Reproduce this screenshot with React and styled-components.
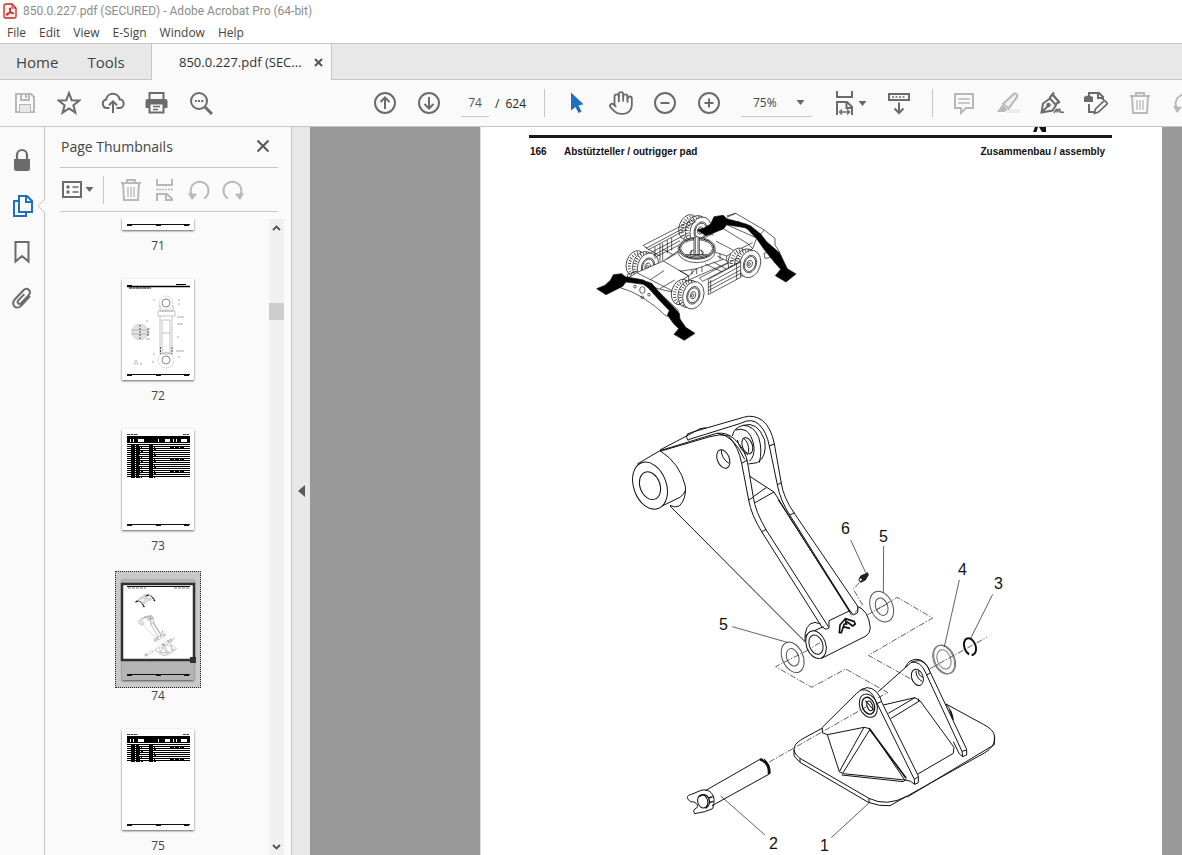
import React from "react";
import styled, { createGlobalStyle } from "styled-components";
import { Hand } from "lucide-react";

const GlobalStyle = createGlobalStyle`
  * { box-sizing: border-box; }
  body { margin: 0; overflow: hidden; background: #fafafa; }
  button, input, select { font: inherit; color: inherit; background: none; border: 0; padding: 0; margin: 0; }
  svg { display: block; flex: none; }
`;

const Shell = styled.div`
  display: flex;
  flex-direction: column;
  height: 100vh;
  font-family: "Open Sans", "Noto Sans", sans-serif;
  font-size: 12px;
  color: #444;
`;

const TitleBar = styled.header`
  display: flex;
  align-items: center;
  gap: 6px;
  height: 24px;
  padding: 0 0 2px 3px;
  background: #fff;
  color: #8c8c8c;
  font-family: Roboto, "Open Sans", sans-serif;
`;

const MenuBar = styled.nav`
  display: flex;
  gap: 13px;
  height: 19px;
  padding-left: 7px;
  background: #fff;
`;

const MenuItem = styled.button`
  height: 17px;
  line-height: 17px;
`;

const TabBar = styled.nav`
  display: flex;
  height: 37px;
  background: #e8e8e8;
  border-top: 1px solid #c6c6c6;
`;

const HomeTabs = styled.div`
  display: flex;
  gap: 29px;
  width: 152px;
  padding-left: 16px;
  border-right: 1px solid #c6c6c6;
  border-bottom: 1px solid #c6c6c6;
  font-size: 15px;
`;

const FileTab = styled.div`
  display: flex;
  align-items: center;
  justify-content: space-between;
  width: 180px;
  padding: 0 8px 0 27px;
  background: #fafafa;
  border-right: 1px solid #c6c6c6;
  color: #333;
`;

const FileName = styled.span`
  font-size: 13px;
`;

const TabFill = styled.div`
  flex: 1;
  border-bottom: 1px solid #c6c6c6;
`;

const ToolBar = styled.div`
  display: flex;
  align-items: center;
  height: 47px;
  padding-left: 3px;
  border-bottom: 1px solid #c6c6c6;
  background: #fafafa;
  overflow: hidden;
`;

const ToolGroup = styled.div`
  display: flex;
  flex: none;
  align-items: center;
  margin-left: ${(p) => p.$before || 0}px;
`;

const ToolButton = styled.button`
  display: flex;
  align-items: center;
  justify-content: center;
  width: ${(p) => p.$width || 44}px;
  height: 44px;
  flex: none;
  color: ${(p) => (p.$faded ? "#b8b8b8" : "#6b6b6b")};
`;

const PageBox = styled.label`
  display: flex;
  align-items: center;
  gap: 6px;
  height: 28px;
  margin-left: 10px;
  color: #222;
`;

const PageInput = styled.input`
  width: 28px;
  height: 28px;
  border-bottom: 1px solid #c6c6c6;
  text-align: center;
  color: #555;
`;

const Divider = styled.span`
  width: 1px;
  height: 28px;
  flex: none;
  background: #c6c6c6;
  margin: 0 ${(p) => p.$after || 0}px 0 ${(p) => p.$before || 0}px;
`;

const ZoomBox = styled.label`
  display: flex;
  align-items: center;
  width: 71px;
  height: 28px;
  margin: 0 20px 0 10px;
  padding-left: 12px;
  border-bottom: 1px solid #c6c6c6;
`;

const ZoomSelect = styled.select`
  appearance: none;
  width: 43px;
  outline: 0;
`;

const Main = styled.div`
  display: flex;
  flex: 1;
  min-height: 0;
`;

const Rail = styled.nav`
  display: flex;
  flex-direction: column;
  width: 45px;
  padding-top: 10px;
  border-right: 1px solid #c6c6c6;
`;

const RailButton = styled.button`
  position: relative;
  display: flex;
  align-items: center;
  justify-content: center;
  width: 44px;
  height: 46px;
  color: ${(p) => (p.$active ? "#1f6fc0" : "#6b6b6b")};
`;

const Notch = styled.svg`
  position: absolute;
  right: -1px;
  top: 16px;
`;

const Panel = styled.aside`
  display: flex;
  flex-direction: column;
  width: 247px;
  border-right: 1px solid #c6c6c6;
`;

const PanelHead = styled.div`
  display: flex;
  align-items: center;
  justify-content: space-between;
  height: 41px;
  margin: 0 13px 0 15px;
  padding: 0 8px 2px 1px;
  border-bottom: 1px solid #c6c6c6;
`;

const PanelTitle = styled.h2`
  margin: 0;
  font-size: 14px;
  font-weight: 400;
`;

const PanelTools = styled.div`
  display: flex;
  align-items: center;
  height: 44px;
  margin: 0 13px 0 15px;
  border-bottom: 1px solid #c6c6c6;
`;

const PanelBody = styled.div`
  display: flex;
  flex: 1;
  min-height: 0;
  padding: 7px 7px 0 0;
`;

const ThumbList = styled.ul`
  flex: 1;
  margin: 0;
  padding: 0 0 0 2px;
  list-style: none;
  overflow: hidden;
  &::before { content: ""; display: block; margin-top: -98px; }
`;

const ThumbItem = styled.li`
  display: flex;
  flex-direction: column;
  align-items: center;
  height: 150px;
`;

const ThumbButton = styled.button`
  position: relative;
  width: 86px;
  height: 117px;
  padding: 7px 6px;
  border: 1px dotted ${(p) => (p.$selected ? "#222" : "transparent")};
  background: ${(p) => (p.$selected ? "#c9c9c9" : "none")};
`;

const Sheet = styled.svg`
  width: 72px;
  height: 101px;
  background: ${(p) => (p.$selected ? "#b4b4b4" : "#fff")};
  box-shadow: 0 1px 2px rgba(0, 0, 0, 0.6);
`;

const ThumbLabel = styled.span`
  line-height: 16px;
`;

const ScrollTrack = styled.div`
  display: flex;
  flex-direction: column;
  align-items: center;
  width: 15px;
  background: #f0f0f0;
`;

const ScrollArrow = styled.button`
  display: flex;
  align-items: center;
  justify-content: center;
  width: 15px;
  height: 17px;
  color: #505050;
`;

const ScrollThumb = styled.div`
  width: 15px;
  height: 17px;
  margin: 67px 0 auto;
  background: #cdcdcd;
`;

const Splitter = styled.button`
  display: flex;
  align-items: center;
  justify-content: center;
  width: 18px;
  background: #e8e8e8;
  color: #5a5a5a;
`;

const Viewer = styled.main`
  flex: 1;
  min-width: 0;
  padding: 0 20px 0 170px;
  background: #999;
  overflow: hidden;
`;

const Page = styled.article`
  min-height: 100%;
  background: #fff;
  border-left: 1px solid #ddd;
  color: #111;
  font-family: "Liberation Sans", Arial, sans-serif;
`;

const PageTop = styled.header`
  margin: 0 50px 0 48px;
`;

const Brand = styled.div`
  display: flex;
  justify-content: flex-end;
  height: 8px;
  padding-right: 65px;
`;

const PageHeading = styled.div`
  display: flex;
  height: 30px;
  padding: 0 7px 0 1px;
  border-top: 3px solid #1a1a1a;
  font-size: 10px;
  font-weight: 700;
  line-height: 28px;
  & > :first-child { width: 34px; }
  & > :last-child { margin-left: auto; }
`;

const Figure = styled.svg`
  width: 100%;
  height: auto;
`;

function Icon({ children, size = 24, sw = 2, ...rest }) {
  return (
    <svg width={size} height={size} viewBox={`0 0 ${size} ${size}`} fill="none" stroke="currentColor" strokeWidth={sw} aria-hidden="true" {...rest}>
      {children}
    </svg>
  );
}

const Caret = () => (
  <svg width="9" height="5" viewBox="0 0 9 5" aria-hidden="true"><path d="M.5 0h8L4.500 5z" fill="#666" /></svg>
);

const AcrobatLogo = () => (
  <svg width="14" height="16" viewBox="0 0 14 16" aria-hidden="true">
    <path d="M2.500 1h6.500l4 4v8.500a1.500 1.500 0 0 1-1.500 1.500h-9A1.500 1.500 0 0 1 1 13.500v-11A1.500 1.500 0 0 1 2.500 1z" fill="#fff1f0" stroke="#c9251c" strokeWidth="1.300" />
    <path d="M9 1v4h4" fill="none" stroke="#c9251c" />
    <path d="M3.500 11.500c0-1.500 6.500-2.500 7-1.200.3 1.200-3.800-1-4.100-4.300 0-1.400 1.500-1.200 1.200.3C7.300 8 5.200 12.200 4 12.200c-.4 0-.5-.3-.5-.7z" fill="none" stroke="#c9251c" strokeWidth="1.100" />
  </svg>
);

const SaveIcon = () => (
  <Icon><path d="M3 3h15l3 3v15H3z" /><path d="M8 3v6h8V3M7 21v-7h10v7" /><path d="M7 14h10v7H7z" fill="#e6e6e6" stroke="none" /><path d="M13 4v3" /></Icon>
);
const StarIcon = () => (
  <Icon><path d="M12 2l2.700 7.200 7.600.3-5.900 4.800 2 7.400L12 17.500l-6.400 4.200 2-7.400-5.900-4.800 7.600-.3z" /></Icon>
);
const CloudIcon = () => (
  <Icon><path d="M8.500 17H6a4.300 4.300 0 0 1-.8-8.500 6.800 6.800 0 0 1 13.400-.3A4.400 4.400 0 0 1 18 17h-2.500" /><path d="M12 22V10.500M8 14.300l4-4 4 4" /></Icon>
);
const PrintIcon = () => (
  <Icon>
    <path d="M2.500 8h18A2 2 0 0 1 22.500 10v7h-22v-7a2 2 0 0 1 2-2z" fill="currentColor" stroke="none" />
    <path d="M4.500 8V2h14v6" />
    <path d="M4.500 12.500h14v9h-14z" fill="#fafafa" />
    <path d="M8 15.500h7M8 18.500h5" strokeWidth="1.300" />
  </Icon>
);
const FindIcon = () => (
  <Icon><circle cx="10" cy="10" r="8" /><path d="M16 16l7 7" strokeWidth="3" /><path d="M5.800 10h2m1.200 0h2m1.200 0h2" /></Icon>
);
const CircleIcon = ({ d }) => (
  <Icon><circle cx="12" cy="12" r="10" /><path d={d} /></Icon>
);
const PointerIcon = () => (
  <Icon><path d="M6 1.500v18l4.500-3.500 3 6 3-1.500-3-6 5-1.200z" fill="#1f6fc0" stroke="none" /></Icon>
);
const FitIcon = () => (
  <Icon size={26}><path d="M5 1v6h15V1M5 25V12h10l5 5v8M14.500 12v6H20" /><path d="M8 22h9M10 19.500L7.500 22l2.500 2.500M15 19.500l2.500 2.500-2.500 2.500" strokeWidth="1.400" /></Icon>
);
const ScrollModeIcon = () => (
  <Icon><path d="M2 3h20v6H2z" /><path d="M5 6h14" strokeDasharray="2 1.500" strokeWidth="1.500" /><path d="M12 11.500V22M7.500 17.500l4.500 4.500 4.500-4.500" /></Icon>
);
const CommentIcon = () => (
  <Icon><path d="M3 3h18v14h-7l-5 5v-5H3z" /><path d="M6 8h12M6 12h12" strokeWidth="1.300" /></Icon>
);
const MarkerIcon = () => (
  <Icon>
    <path d="M12 18h12v4H9z" fill="#ececec" stroke="none" />
    <path d="M17.500 3.200c1-1 2-1 3 0s1.100 2 .2 3.200L12.500 17.500l-5.500-4.500z" fill="#f0f0f0" />
    <path d="M6 14l5.500 4.500-3 2.500H1z" fill="currentColor" stroke="none" />
  </Icon>
);
const SignIcon = () => (
  <Icon>
    <path d="M1.500 21.500l1.500-9 7-5 6 6.500-3.500 5.500zM2 21l6-6" />
    <circle cx="8.500" cy="14" r="1.200" fill="currentColor" />
    <path d="M9.500 7l4.500-5.500M15 13.500l5-3M13 4l6 7" strokeWidth="2.200" />
    <path d="M14 22c2-3 3-5 3-3s0 3 1.500 0 1.500 1 1.500 2 3-1 3.500 1" strokeWidth="1.500" />
  </Icon>
);
const EditPdfIcon = () => (
  <Icon>
    <path d="M5 5V2h10l4 4v3M14 2v5h5M5 13v8h5" />
    <path d="M0 6q4-3 9 0v5H0z" fill="currentColor" stroke="none" />
    <path d="M10.500 22.500l1-4.500 9-8.500 3 3-9 8.500z" strokeWidth="1.700" />
  </Icon>
);
const TrashIcon = () => (
  <Icon><path d="M2 5h20M8 5V2h8v3M4 5l1 17h14l1-17" /><path d="M9 9v10M12 9v10M15 9v10" strokeWidth="1.300" /></Icon>
);
const TurnIcon = ({ flip }) => (
  <Icon transform={flip ? "scale(-1 1)" : undefined}><path d="M5 17.500A9 9 0 1 1 17 20.500" /><path d="M1 15l9 1-5 6z" fill="currentColor" stroke="none" /></Icon>
);
const OptionsIcon = () => (
  <Icon><path d="M2 4h18v15H2z" /><path d="M11.500 9h6M11.500 14h6" strokeWidth="1.600" /><circle cx="7" cy="9" r="1.700" fill="currentColor" stroke="none" /><circle cx="7" cy="14" r="1.700" fill="currentColor" stroke="none" /></Icon>
);
const SplitIcon = () => (
  <Icon><path d="M4 1v6h15V1M4 23v-7h10l5 5v2M13 16v6h6" /><path d="M3 11.500h18" strokeDasharray="2 1" strokeWidth="1.500" /></Icon>
);
const LockIcon = () => (
  <Icon><path d="M4 11h16v9.500a2.500 2.500 0 0 1-2.500 2.500h-11A2.500 2.500 0 0 1 4 20.500z" fill="currentColor" stroke="none" /><path d="M7 12V7a5 5 0 0 1 10 0v5" strokeWidth="2.200" /></Icon>
);
const PagesIcon = () => (
  <Icon><path d="M9 2h8l5 5v11H9z" /><path d="M16 2v6h6M9 7H4v15h12v-4" /></Icon>
);
const BookmarkIcon = () => (
  <Icon><path d="M5.500 2h13v19.500L12 16l-6.500 5.500z" /></Icon>
);
const ClipIcon = () => (
  <Icon><path d="M20 10l-8.700 9.600c-2 2.200-5 2.400-6.800.8s-1.900-4.600.2-6.900l8.800-9.200c1.600-1.600 3.700-1.800 5.200-.5 1.600 1.500 1.500 3.600 0 5.300l-7.600 8c-.9 1-2 1-2.900.3-.9-.9-.8-2 .1-3l6-6.300" /></Icon>
);

/* Tyre with a dashed tread, a rim and a hub. */
function Wheel({ x, y, twin }) {
  return (
    <g transform={`translate(${x} ${y}) rotate(18)`}>
      {twin && (
        <>
          <ellipse cx="-38" cy="2" rx="28" ry="39" fill="#fff" />
          <ellipse cx="-34" cy="2" rx="22" ry="33" strokeWidth="9" strokeDasharray="2 6" />
        </>
      )}
      <ellipse cx="-14" cy="0" rx="32" ry="42" fill="#fff" />
      <ellipse cx="-12" cy="0" rx="27" ry="37" strokeWidth="9" strokeDasharray="2 6" />
      <ellipse rx="31" ry="42" fill="#fff" />
      <ellipse rx="19" ry="27" />
      <ellipse rx="16" ry="23" />
      <ellipse cx="-1" rx="8" ry="11" />
      <ellipse cx="-2" cy="1" rx="3" ry="5" />
    </g>
  );
}

function Carrier({ line = 2 }) {
  return (
    <g transform="translate(580 200) scale(0.333333)" strokeWidth={line}>
      <path d="M440 48L467 40 553 90 585 115V135L600 158M553 90L530 115M467 40L440 52M448 62L480 66" />
      <Wheel x={362} y={92} twin />
      <Wheel x={204} y={200} twin />
      <path d="M190 136L338 60 346 66 200 144zM204 150L320 88M212 158L316 104M220 166L300 122M228 170L296 136M195 142L240 168M240 132V184M225 140V176M248 130V182M262 120V160M275 114V152M250 148L290 170" />
      <path d="M250 183L296 152 400 100 440 74 530 114 518 146 440 190 326 240 286 278 242 268 138 238 170 218z" fill="#fff" />
      <path d="M170 218L284 276M250 183L326 228 286 250M326 228V240M210 240L252 212M240 266L284 240M296 210L326 228M300 214L350 206M326 228L350 206 430 178M350 206V222M366 200V216M336 210V224M376 192L440 222M400 186L440 208M412 168L466 196M440 140L466 154 518 128M430 86L505 132M505 132L518 146M374 90L400 106M408 124L440 140M466 154L440 168 404 156M440 168V184M420 160V178M260 178L296 156" />
      <Wheel x={510} y={192} twin />
      <path d="M385 238L482 186V232L385 284z" fill="#fff" />
      <path d="M358 234L474 174 482 184 368 244zM385 250L482 198M385 262L482 210M385 272L482 220M392 240V278M470 192V238" />
      <ellipse cx="350" cy="154" rx="56" ry="34" fill="#fff" />
      <ellipse cx="350" cy="145" rx="56" ry="33" fill="#fff" />
      <ellipse cx="350" cy="145" rx="52" ry="30" strokeWidth={line + 1} />
      <ellipse cx="350" cy="145" rx="48" ry="26" />
      <ellipse cx="350" cy="158" rx="20" ry="9" />
      <path d="M342 163V112Q350 108 358 112V163zM346 112V160M354 112V160M330 168L336 150M370 168L364 150M318 164L382 164" fill="#fff" />
      <Wheel x={340} y={286} twin />
      <path d="M118 262Q190 282 258 348L285 350 296 332 205 246 138 232z" fill="#fff" />
      <ellipse cx="187" cy="270" rx="8" ry="10" />
      <circle cx="165" cy="260" r="4" /><circle cx="207" cy="284" r="4" /><circle cx="187" cy="292" r="4" />
      <path d="M143 236V222L170 214M552 160L572 155 575 172 555 175z" />
      <path d="M352 90L372 84 392 72 402 50 430 46 440 56 498 72 512 78 542 102 560 125 600 160 614 190 622 206 648 222 618 246 586 227 602 208 586 190 568 168 552 148 530 116 503 88 495 83 440 74 430 87 378 107zM50 266L75 256 92 240 100 224 125 221 136 230 190 240 200 246 215 250 245 285 275 315 298 340 300 357 317 382 345 400 313 421 282 403 296 386 280 370 262 345 268 332 230 292 205 264 190 253 138 246 128 259 78 284z" fill="#000" />
    </g>
  );
}

function Arm() {
  return (
    <>
      <g transform="translate(620 400) scale(0.333333)">
        <path d="M120 150L200 108 240 86 258 83M205 122Q196 112 202 102L215 97 370 52Q400 42 428 62 454 84 463 132L484 250Q490 292 523 340L712 617M205 119L362 70Q395 52 418 74 440 96 448 138L472 254Q480 300 510 346L692 636M440 262L462 276 694 644M475 300L690 634" />
        <path d="M337 108Q342 82 370 76 400 76 416 112 428 150 418 188M348 90Q362 84 378 92 396 104 402 140 404 170 388 184M370 76Q412 62 434 120 442 170 412 188L385 192" />
        <ellipse cx="382" cy="137" rx="15" ry="25" transform="rotate(-20 382 137)" />
        <path d="M370 115Q388 125 386 158M352 120Q358 148 384 165" />
        <path d="M120 152L290 100Q320 96 342 116 378 148 384 196L400 292Q406 334 438 389L625 680M120 154L270 110Q300 100 326 108 356 142 365 190L386 300Q394 345 425 395L605 680" />
        <path d="M292 100Q340 104 374 178M365 190L383 180M386 300L401 291M425 395L439 388M448 138L463 132M472 254L485 248M510 345L524 338M388 228L440 262 400 290M405 308L462 276" />
        <ellipse cx="310" cy="177" rx="18" ry="29" transform="rotate(-22 310 177)" />
        <path d="M304 150Q304 176 327 190" />
        <path d="M52 192L120 152Q180 190 196 258 200 296 178 318 162 324 150 316M110 326L180 292Q192 284 197 270" />
        <ellipse cx="90" cy="257" rx="49" ry="73" transform="rotate(-20 90 257)" fill="#fff" />
        <ellipse cx="90" cy="257" rx="30" ry="43" transform="rotate(-20 90 257)" />
        <path d="M150 318L555 725" />
        <path d="M337 680L505 728" strokeWidth="2" />
      </g>
      <g transform="translate(760 500) scale(0.333333)">
        <path d="M290 318Q326 330 331 384 330 400 318 408L183 476M150 398L190 380M207 362L270 332M185 380L198 388 207 384V362M270 332L280 345 293 338V318M135 425Q132 370 165 367L182 372M135 410Q150 390 165 394" />
        <ellipse cx="168" cy="434" rx="29" ry="43" transform="rotate(-20 168 434)" fill="#fff" />
        <ellipse cx="168" cy="434" rx="20" ry="30" transform="rotate(-20 168 434)" />
        <path d="M238 398L240 375 256 356 282 364 286 372 278 378 262 366 252 374 244 398zM248 380L270 385M256 357L260 375" strokeWidth="5" />
        <path d="M298 238L302 228 316 222 322 218 325 224 316 240 302 247z" fill="#222" />
        <circle cx="302" cy="239" r="5" fill="#fff" />
        <g stroke="#555">
          <ellipse cx="365" cy="320" rx="33" ry="48" transform="rotate(-24 365 320)" />
          <ellipse cx="365" cy="320" rx="18" ry="27" transform="rotate(-20 365 320)" />
          <ellipse cx="98" cy="472" rx="31" ry="48" transform="rotate(-24 98 472)" />
          <ellipse cx="98" cy="472" rx="18" ry="27" transform="rotate(-20 98 472)" />
        </g>
        <g stroke="#777">
          <ellipse cx="554" cy="478" rx="30" ry="45" transform="rotate(-24 554 478)" />
          <ellipse cx="551" cy="479" rx="30" ry="45" transform="rotate(-24 551 479)" />
          <ellipse cx="552" cy="478" rx="20" ry="30" transform="rotate(-20 552 478)" />
        </g>
        <ellipse cx="630" cy="440" rx="17" ry="26" transform="rotate(-20 630 440)" strokeWidth="6" strokeDasharray="38 8 200 0" />
        <g strokeWidth="2">
          <path d="M272 120L317 218M371 138L370 278M598 240L553 440M698 283L632 415" />
          <path d="M145 450L47 500 155 562 257 507 384 578 352 594M322 345L412 292 518 354 325 466 462 542M510 506L680 412M298 248L280 268 308 315 272 350M180 428L150 446M380 312L350 330" strokeDasharray="18 5 4 5" />
        </g>
      </g>
    </>
  );
}

function Pad() {
  return (
    <g transform="translate(670 640) scale(0.333333)">
      <path d="M456 265L395 298Q372 312 372 328 374 346 395 358L597 475Q650 502 712 468L945 338Q973 320 974 298V288Q970 268 940 253L828 192M372 328V348L390 367 595 487Q630 500 660 497L712 468M712 471L973 314V290M390 356V367M597 475V488M828 192Q846 212 850 240" />
      <path d="M640 195L735 173 750 182 852 322 850 340 742 403M655 220L735 173M662 236L750 182M745 176V184" />
      <path d="M625 155L715 75Q726 62 750 62 770 68 780 95L890 328V345L878 350 868 342 850 305M740 58Q716 58 706 82M770 105L876 334 890 330M876 334L878 350M770 105L782 98M740 58Q766 58 780 95" />
      <path d="M724 66Q752 64 766 96L770 105" />
      <ellipse cx="742" cy="112" rx="17" ry="25" transform="rotate(-20 742 112)" />
      <path d="M738 92Q738 114 756 124M746 92Q744 106 758 112" />
      <path d="M457 278V262L560 160Q592 128 620 156 630 166 636 188L745 408V428L734 433 722 424 704 420 600 266 582 262 472 284z" fill="#fff" />
      <path d="M572 150Q604 144 618 184L733 418 745 410M733 418L734 433M618 192L636 184" />
      <path d="M472 284L508 395 520 401 704 420M582 262L508 395M600 268L518 400M515 405L700 425 710 416" />
      <path d="M598 266L708 414" strokeWidth="5" />
      <path d="M840 210L848 235" strokeWidth="5" />
      <g transform="rotate(-20 595 197)">
        <ellipse cx="595" cy="197" rx="26" ry="36" />
        <ellipse cx="595" cy="197" rx="18" ry="26" strokeWidth="4" />
        <ellipse cx="599" cy="199" rx="8" ry="15" />
        <path d="M592 180L606 214" />
      </g>
      <path d="M106 452L270 358M126 497L298 402" />
      <path d="M270 358Q300 368 297 402" strokeWidth="8" />
      <path d="M282 356Q302 376 300 398M125 460Q138 474 128 506L104 515 74 521Q66 510 80 504 88 494 72 486 60 488 54 478 48 466 62 464L96 450Q116 448 125 460" />
      <ellipse cx="98" cy="484" rx="15" ry="20" transform="rotate(-15 98 484)" />
      <path d="M88 470Q104 456 116 474 124 494 106 505M116 474L128 470M118 488L130 484" strokeWidth="4" />
      <g strokeWidth="2">
        <path d="M152 468L285 585M598 488L484 593" />
        <path d="M298 366L595 197" strokeDasharray="18 5 4 5" />
      </g>
    </g>
  );
}

const callouts = [
  ["5", 719, 630], ["6", 841, 534], ["5", 879, 542], ["4", 958, 575],
  ["3", 994, 589], ["2", 769, 849], ["1", 820, 851],
];

/* Parts list page: a black heading band over ruled rows. */
function TableSheet({ rows }) {
  const list = Array.from({ length: rows }, (_, i) => i);
  return (
    <>
      <path d="M5 5.500h11M61 5.500h6" stroke="#444" strokeDasharray="3 .5" />
      <path d="M5 8.500h63" stroke="#000" strokeWidth="3" />
      <path d="M5 11.500h63" stroke="#000" strokeWidth="3" strokeDasharray="3 1 2 1 4 6 14 1 6 5" />
      <path d="M5 13.500h63" stroke="#000" />
      {list.map((i) => (
        <g key={i} stroke="#000">
          <path d={`M5 ${15.500 + i * 2}h63`} strokeWidth="1.200" />
          <path d={`M9 ${16.500 + i * 2}h${8 + ((i * 3) % 5)}M27 ${16.500 + i * 2}h${5 + (i % 3)}`} strokeDasharray="4 1" />
          {i % 6 === 1 && <path d={`M48 ${16.500 + i * 2}h14`} strokeDasharray="4 1" />}
        </g>
      ))}
    </>
  );
}

function CylinderSheet() {
  return (
    <>
      <path d="M5 7.500h63" stroke="#000" strokeWidth="1.500" />
      <path d="M5 6.500h5M54 5.500h10" stroke="#000" />
      <path d="M7 9h22" stroke="#000" strokeDasharray="3 .5" />
      <g fill="none" stroke="#888" strokeWidth=".5">
        <circle cx="44" cy="24" r="7" stroke="#bbb" /><circle cx="44" cy="24" r="4" strokeWidth="1" />
        <path d="M38 26v6h13v-6M36 32h17v5H36zM38 37v38h12V37M40 41h8v33h-8zM40 54h8" />
        <circle cx="44" cy="81" r="8" stroke="#bbb" /><circle cx="44" cy="81" r="4" strokeWidth="1" />
        <circle cx="18" cy="53" r="8" fill="#e2e2e2" stroke="#bbb" />
        <path d="M9 51h18M9 55h18M14 81l-2 4h4z" />
      </g>
      <path d="M18 46v15M38.500 68v7M50 68v7M26 49v8" stroke="#555" strokeDasharray="2 1" />
      <path d="M31 21h2M56 21h2M56 25h2M55 38h7M55 45h6M24 42h2M25 50h3M26 54h2M24 60h4M55 58h2M54 72h8M56 78h2M30 83h2M31 75h2M18 85h2" stroke="#aaa" />
    </>
  );
}

const Footer = () => (
  <><path d="M5 95.500h63" stroke="#111" /><path d="M5 96.500h5M34 96.500h5M62 96.500h5" stroke="#111" /></>
);

function ViewSheet() {
  return (
    <>
      <rect x="0" y="5" width="72" height="76" fill="#fff" />
      <path d="M5 7.500h63" stroke="#111" />
      <path d="M6 9h18M52 9h15" stroke="#777" strokeDasharray="3 1" />
      <g transform="translate(-49 -7) scale(0.1037)" fill="none" stroke="#555" strokeWidth="6"><Carrier line={2} /><Arm /><Pad /></g>
      <rect x="0" y="5" width="72" height="76" fill="none" stroke="#303030" strokeWidth="2.500" />
      <rect x="68" y="78" width="6" height="6" fill="#303030" />
    </>
  );
}

const pages = [
  { no: 71 }, { no: 72, kind: "cylinder" }, { no: 73, rows: 17 },
  { no: 74, selected: true }, { no: 75, rows: 9 },
];

export default function App() {
  return (
    <Shell>
      <GlobalStyle />
      <TitleBar><AcrobatLogo /><span>850.0.227.pdf (SECURED) - Adobe Acrobat Pro (64-bit)</span></TitleBar>
      <MenuBar>
        {["File", "Edit", "View", "E-Sign", "Window", "Help"].map((m) => <MenuItem key={m}>{m}</MenuItem>)}
      </MenuBar>
      <TabBar>
        <HomeTabs><button>Home</button><button>Tools</button></HomeTabs>
        <FileTab>
          <FileName>850.0.227.pdf (SEC...</FileName>
          <button aria-label="Close tab"><svg width="9" height="9" viewBox="0 0 9 9"><path d="M1 1l7 7M8 1L1 8" stroke="#555" strokeWidth="2" /></svg></button>
        </FileTab>
        <TabFill />
      </TabBar>
      <ToolBar>
        <ToolGroup>
          <ToolButton $faded aria-label="Save"><SaveIcon /></ToolButton>
          <ToolButton aria-label="Star"><StarIcon /></ToolButton>
          <ToolButton aria-label="Upload"><CloudIcon /></ToolButton>
          <ToolButton aria-label="Print"><PrintIcon /></ToolButton>
          <ToolButton aria-label="Find"><FindIcon /></ToolButton>
        </ToolGroup>
        <ToolGroup $before={140}>
          <ToolButton aria-label="Previous page"><CircleIcon d="M12 18V7M7.500 11L12 6.500l4.500 4.500" /></ToolButton>
          <ToolButton aria-label="Next page"><CircleIcon d="M12 6v11M7.500 13l4.500 4.500 4.500-4.500" /></ToolButton>
          <PageBox><PageInput defaultValue="74" aria-label="Page number" /><span>/</span><span>624</span></PageBox>
        </ToolGroup>
        <Divider $before={18} $after={10} />
        <ToolGroup>
          <ToolButton aria-label="Select"><PointerIcon /></ToolButton>
          <ToolButton aria-label="Pan"><Hand size={26} strokeWidth={1.7} /></ToolButton>
          <ToolButton aria-label="Zoom out"><CircleIcon d="M7.500 12h9" /></ToolButton>
          <ToolButton aria-label="Zoom in"><CircleIcon d="M7.500 12h9M12 7.500v9" /></ToolButton>
          <ZoomBox><ZoomSelect aria-label="Zoom level"><option>75%</option></ZoomSelect><Caret /></ZoomBox>
          <ToolButton $width={34} aria-label="Fit width"><FitIcon /><Caret /></ToolButton>
          <ToolButton $width={66} aria-label="Scrolling mode"><ScrollModeIcon /></ToolButton>
        </ToolGroup>
        <Divider $after={9} />
        <ToolGroup>
          <ToolButton $faded aria-label="Comment"><CommentIcon /></ToolButton>
          <ToolButton $faded aria-label="Highlight"><MarkerIcon /></ToolButton>
          <ToolButton aria-label="Sign"><SignIcon /></ToolButton>
          <ToolButton aria-label="Edit"><EditPdfIcon /></ToolButton>
          <ToolButton $faded aria-label="Delete"><TrashIcon /></ToolButton>
          <ToolButton $faded aria-label="Undo"><TurnIcon /></ToolButton>
        </ToolGroup>
      </ToolBar>
      <Main>
        <Rail>
          <RailButton aria-label="Security"><LockIcon /></RailButton>
          <RailButton $active aria-label="Page thumbnails">
            <PagesIcon />
            <Notch width="8" height="14" viewBox="0 0 8 14"><path d="M8 0L1 7l7 7" fill="#fafafa" stroke="#c6c6c6" /></Notch>
          </RailButton>
          <RailButton aria-label="Bookmarks"><BookmarkIcon /></RailButton>
          <RailButton aria-label="Attachments"><ClipIcon /></RailButton>
        </Rail>
        <Panel>
          <PanelHead>
            <PanelTitle>Page Thumbnails</PanelTitle>
            <button aria-label="Close panel"><svg width="14" height="14" viewBox="0 0 14 14"><path d="M1.500 1.500l11 11M12.500 1.500l-11 11" stroke="#555" strokeWidth="2" /></svg></button>
          </PanelHead>
          <PanelTools>
            <ToolButton $width={34} aria-label="Options"><OptionsIcon /><Caret /></ToolButton>
            <Divider $before={9} $after={10} />
            <ToolButton $faded $width={34} aria-label="Delete pages"><TrashIcon /></ToolButton>
            <ToolButton $faded $width={34} aria-label="Split pages"><SplitIcon /></ToolButton>
            <ToolButton $faded $width={34} aria-label="Rotate left"><TurnIcon /></ToolButton>
            <ToolButton $faded $width={34} aria-label="Rotate right"><TurnIcon flip /></ToolButton>
          </PanelTools>
          <PanelBody>
            <ThumbList>
              {pages.map((p) => (
                <ThumbItem key={p.no}>
                  <ThumbButton $selected={p.selected} aria-label={`Go to page ${p.no}`}>
                    <Sheet $selected={p.selected} viewBox="0 0 72 101" overflow="visible">
                      {p.selected && <ViewSheet />}
                      {p.kind === "cylinder" && <CylinderSheet />}
                      {p.rows && <TableSheet rows={p.rows} />}
                      <Footer />
                    </Sheet>
                  </ThumbButton>
                  <ThumbLabel>{p.no}</ThumbLabel>
                </ThumbItem>
              ))}
            </ThumbList>
            <ScrollTrack>
              <ScrollArrow aria-label="Scroll up"><svg width="9" height="6" viewBox="0 0 9 6"><path d="M1 5l3.500-3.500L8 5" fill="none" stroke="currentColor" strokeWidth="1.800" /></svg></ScrollArrow>
              <ScrollThumb />
              <ScrollArrow aria-label="Scroll down"><svg width="9" height="6" viewBox="0 0 9 6"><path d="M1 1l3.500 3.500L8 1" fill="none" stroke="currentColor" strokeWidth="1.800" /></svg></ScrollArrow>
            </ScrollTrack>
          </PanelBody>
        </Panel>
        <Splitter aria-label="Collapse panel"><svg width="7" height="12" viewBox="0 0 7 12"><path d="M7 0v12L0 6z" fill="currentColor" /></svg></Splitter>
        <Viewer>
          <Page>
            <PageTop>
              <Brand>
                <svg width="14" height="5" viewBox="0 0 14 5" aria-hidden="true"><path d="M2 0h3L3.500 5H0zM6 0h7v5H9z" fill="#111" /></svg>
              </Brand>
              <PageHeading><span>166</span><span>Abstützteller / outrigger pad</span><span>Zusammenbau / assembly</span></PageHeading>
            </PageTop>
            <Figure viewBox="481 165 681 690" fill="none" stroke="#111" strokeWidth="3" strokeLinejoin="round" role="img" aria-label="Outrigger pad assembly">
              <Carrier /><Pad /><Arm />
              <g fill="#111" stroke="none" fontSize="16">
                {callouts.map(([n, x, y]) => <text key={x} x={x} y={y}>{n}</text>)}
              </g>
            </Figure>
          </Page>
        </Viewer>
      </Main>
    </Shell>
  );
}
